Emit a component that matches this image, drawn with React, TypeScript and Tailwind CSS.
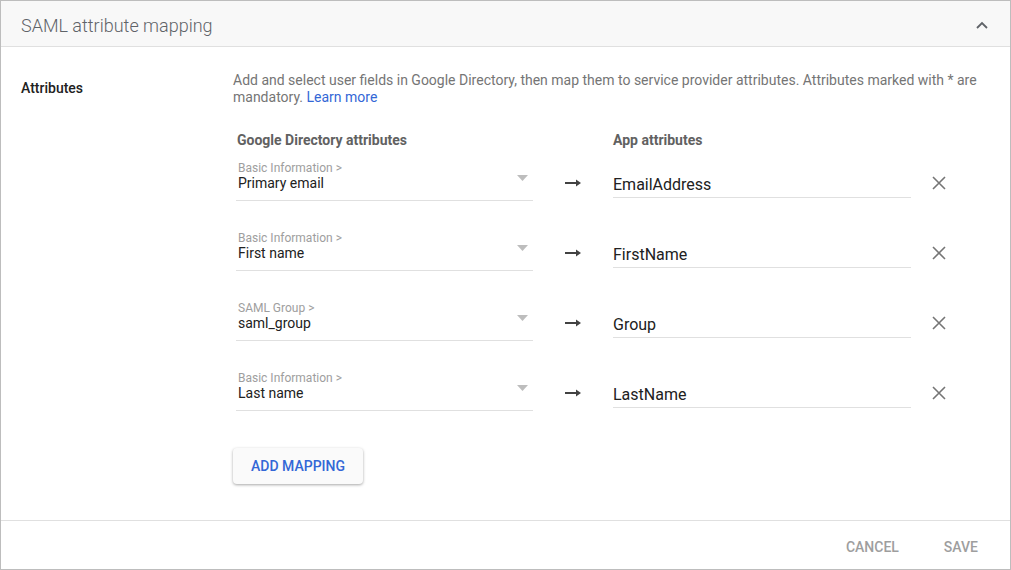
import React from "react";

const rows = [
  { group: "Basic Information >", field: "Primary email", app: "EmailAddress" },
  { group: "Basic Information >", field: "First name", app: "FirstName" },
  { group: "SAML Group >", field: "saml_group", app: "Group" },
  { group: "Basic Information >", field: "Last name", app: "LastName" },
];

function MappingRow({ group, field, app }: { group: string; field: string; app: string }) {
  return (
    <div className="grid h-[70px] grid-cols-[297px_80px_298px_56px] items-start">
      <div className="relative border-b border-[#e0e0e0] pb-[9px] pl-[2px]">
        <div className="text-[12px] leading-[14px] text-[#9e9e9e]">{group}</div>
        <div className="text-[14px] leading-[16px] text-[#212121]">{field}</div>
        {/* dropdown caret */}
        <svg className="absolute right-[5px] top-[14px]" width="11" height="6" viewBox="0 0 11 6">
          <path d="M0 0h11L5.5 6z" fill="#bdbdbd" />
        </svg>
      </div>
      <div className="flex justify-center pt-[16px]">
        <svg width="17" height="12" viewBox="0 0 17 12">
          <path d="M0 6h14" stroke="#424242" strokeWidth="2" />
          <path d="M11 2.5L16 6l-5 3.5z" fill="#424242" />
        </svg>
      </div>
      <div className="mt-[14px] border-b border-[#e0e0e0] pb-[3px] text-[16px] leading-[19px] text-[#212121]">
        {app}
      </div>
      <div className="flex justify-center pt-[15px]">
        <svg width="14" height="14" viewBox="0 0 14 14">
          <path d="M1 1l12 12M13 1L1 13" stroke="#757575" strokeWidth="1.6" />
        </svg>
      </div>
    </div>
  );
}

export default function App() {
  return (
    <div className="flex h-[570px] w-full flex-col border border-[#bdbdbd] bg-white font-['Roboto','Liberation_Sans',sans-serif]">
      <header className="flex h-[46px] shrink-0 items-center justify-between border-b border-[#e0e0e0] bg-[#f8f8f8] pl-5 pr-[22px] pt-[3px]">
        <h1 className="text-[18px] font-light text-[#5f6368]">SAML attribute mapping</h1>
        <svg width="12" height="8" viewBox="0 0 12 8">
          <path d="M1 7l5-5 5 5" fill="none" stroke="#5f6368" strokeWidth="1.8" />
        </svg>
      </header>

      <main className="flex flex-1 pt-[25px]">
        <div className="w-[232px] shrink-0 pl-5 pt-[6px] text-[14px] font-medium leading-5 text-[#212121]">
          Attributes
        </div>

        <div className="flex-1 pr-[24px]">
          <p className="text-[14px] leading-[17px] text-[#757575]">
            Add and select user fields in Google Directory, then map them to service provider attributes. Attributes
            marked with * are mandatory. <span className="text-[#3367d6]">Learn more</span>
          </p>

          <div className="ml-[3px] mt-[26px]">
            <div className="grid grid-cols-[297px_80px_298px] text-[14px] font-bold leading-4 text-[#616161]">
              <div className="pl-px">Google Directory attributes</div>
              <div />
              <div>App attributes</div>
            </div>
            <div className="mt-[13px]">
              {rows.map((r) => (
                <MappingRow key={r.app} {...r} />
              ))}
            </div>
          </div>

          <button className="mt-[7px] h-9 w-[130px] rounded-sm bg-[#fafafa] text-[14px] font-medium text-[#3367d6] shadow-[0_1px_3px_rgba(0,0,0,0.35)]">
            ADD MAPPING
          </button>
        </div>
      </main>

      <footer className="flex h-[49px] shrink-0 items-center justify-end gap-[45px] border-t border-[#e0e0e0] pr-[32px] pt-[5px] text-[14px] font-medium text-[#9e9e9e]">
        <span>CANCEL</span>
        <span>SAVE</span>
      </footer>
    </div>
  );
}
